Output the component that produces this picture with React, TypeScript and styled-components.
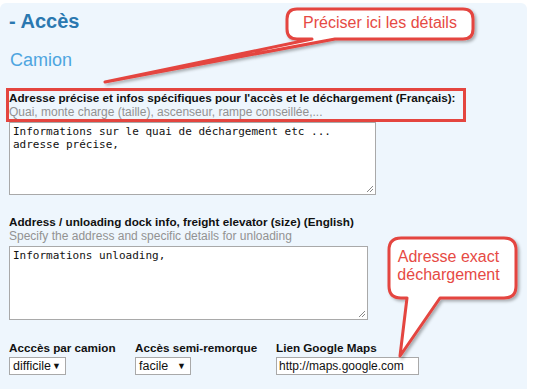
import styled, { createGlobalStyle } from "styled-components";

const GlobalStyle = createGlobalStyle`
  html, body {
    margin: 0;
    padding: 0;
    background: #ffffff;
    font-family: "Liberation Sans", Arial, sans-serif;
  }
`;

const Page = styled.div`
  position: relative;
  width: 533px;
  height: 389px;
  overflow: hidden;
`;

const Panel = styled.section`
  margin: 3px 6px 0 0;
  height: 420px;
  background: #eef6fd;
  border-radius: 6px;
  padding: 6px 0 0 9px;
  box-sizing: border-box;
`;

const Title = styled.h2`
  margin: 0;
  font-size: 20px;
  line-height: 24px;
  font-weight: bold;
  color: #2a78b0;
`;

const SubTitle = styled.h3`
  margin: 16px 0 0 1px;
  font-size: 18px;
  line-height: 22px;
  font-weight: normal;
  color: #4da5e0;
`;

const LabelGroup = styled.div<{ $highlight?: boolean; $top: number }>`
  margin-top: ${(p) => p.$top}px;
  width: 454px;
  outline: ${(p) => (p.$highlight ? "3px solid #e4453f" : "none")};
`;

const Label = styled.div`
  font-size: 11.7px;
  line-height: 14px;
  font-weight: bold;
  color: #111;
  white-space: nowrap;
`;

const Hint = styled.div`
  font-size: 12px;
  line-height: 14px;
  color: #929292;
  white-space: nowrap;
`;

const TextArea = styled.div<{ $w: number; $h: number; $top: number }>`
  position: relative;
  margin-top: ${(p) => p.$top}px;
  width: ${(p) => p.$w}px;
  height: ${(p) => p.$h}px;
  box-sizing: border-box;
  background: #fff;
  border: 1px solid #a9a9a9;
  padding: 2px 3px;
  font-family: "DejaVu Sans Mono", "Liberation Mono", monospace;
  font-size: 11px;
  line-height: 13px;
  color: #111;
  white-space: pre;
`;

const Grip = styled.svg`
  position: absolute;
  right: 1px;
  bottom: 1px;
`;

const FieldRow = styled.div`
  display: flex;
  margin-top: 21px;
`;

const Field = styled.div<{ $w: number }>`
  width: ${(p) => p.$w}px;
  display: flex;
  flex-direction: column;
  align-items: flex-start;
  gap: 2px;
`;

const SelectBox = styled.div<{ $w: number }>`
  width: ${(p) => p.$w}px;
  height: 18px;
  box-sizing: border-box;
  border: 1px solid #a9a9a9;
  background: #fff;
  display: flex;
  align-items: center;
  justify-content: space-between;
  padding: 0 4px 0 3px;
  font-size: 12.5px;
  color: #111;
`;

const Arrow = styled.span`
  font-size: 9px;
  line-height: 9px;
  color: #111;
`;

const TextInput = styled.div`
  width: 143px;
  height: 18px;
  box-sizing: border-box;
  border: 1px solid #a9a9a9;
  background: #fff;
  padding: 0 2px;
  font-size: 12px;
  line-height: 16px;
  color: #111;
`;

const Overlay = styled.svg`
  position: absolute;
  left: 0;
  top: 0;
  pointer-events: none;
`;

const CalloutText = styled.div<{ $x: number; $y: number; $w: number }>`
  position: absolute;
  left: ${(p) => p.$x}px;
  top: ${(p) => p.$y}px;
  width: ${(p) => p.$w}px;
  text-align: center;
  font-size: 16px;
  line-height: 18px;
  color: #e64a44;
`;

const ResizeGrip = () => (
  <Grip width="9" height="9" viewBox="0 0 9 9">
    <path d="M8 2 L2 8 M8 5 L5 8" stroke="#888" strokeWidth="1" />
  </Grip>
);

export default function App() {
  return (
    <Page>
      <GlobalStyle />
      <Panel>
        <Title>- Accès</Title>
        <SubTitle>Camion</SubTitle>

        <LabelGroup $highlight $top={20}>
          <Label>Adresse précise et infos spécifiques pour l'accès et le déchargement (Français):</Label>
          <Hint>Quai, monte charge (taille), ascenseur, rampe conseillée,...</Hint>
        </LabelGroup>
        <TextArea $w={367} $h={73} $top={3}>
          {"Informations sur le quai de déchargement etc ...\nadresse précise,"}
          <ResizeGrip />
        </TextArea>

        <LabelGroup $top={20}>
          <Label>Address / unloading dock info, freight elevator (size) (English)</Label>
          <Hint>Specify the address and specific details for unloading</Hint>
        </LabelGroup>
        <TextArea $w={359} $h={74} $top={3}>
          {"Informations unloading,"}
          <ResizeGrip />
        </TextArea>

        <FieldRow>
          <Field $w={126}>
            <Label>Acccès par camion</Label>
            <SelectBox $w={57}>
              difficile <Arrow>▼</Arrow>
            </SelectBox>
          </Field>
          <Field $w={141}>
            <Label>Accès semi-remorque</Label>
            <SelectBox $w={56}>
              facile <Arrow>▼</Arrow>
            </SelectBox>
          </Field>
          <Field $w={160}>
            <Label>Lien Google Maps</Label>
            <TextInput>http://maps.google.com</TextInput>
          </Field>
        </FieldRow>
      </Panel>

      <Overlay width="533" height="389" viewBox="0 0 533 389">
        <defs>
          <filter id="shade" x="-10%" y="-10%" width="130%" height="140%">
            <feDropShadow dx="2" dy="2" stdDeviation="1.6" floodColor="#000" floodOpacity="0.3" />
          </filter>
        </defs>
        <path
          d="M297,9 H463 Q473,9 473,19 V29 Q473,39 463,39 H335 L105,82 L312,39 H297 Q287,39 287,29 V19 Q287,9 297,9 Z"
          fill="#fff"
          stroke="#e4453f"
          strokeWidth="3"
          strokeLinejoin="round"
          filter="url(#shade)"
        />
        <path
          d="M401,238 H504 Q516,238 516,250 V286 Q516,298 504,298 H440 L400,356 L407,298 H401 Q389,298 389,286 V250 Q389,238 401,238 Z"
          fill="#fff"
          stroke="#e4453f"
          strokeWidth="3"
          strokeLinejoin="round"
          filter="url(#shade)"
        />
      </Overlay>
      <CalloutText $x={287} $y={14} $w={186}>Préciser ici les détails</CalloutText>
      <CalloutText $x={385} $y={248} $w={127}>
        Adresse exact
        <br />
        déchargement
      </CalloutText>
    </Page>
  );
}
